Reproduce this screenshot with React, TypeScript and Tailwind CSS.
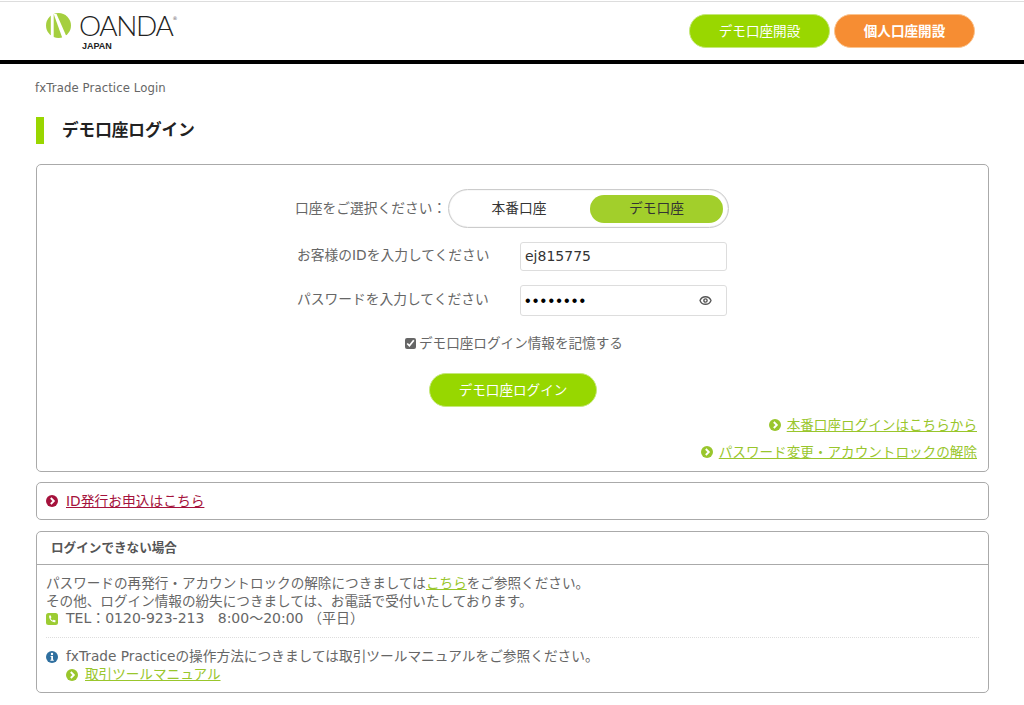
import { Eye } from "lucide-react";

const FONT = "font-['DejaVu_Sans','Noto_Sans_CJK_JP',sans-serif]";

function Arrow({ color, className }: { color: string; className?: string }) {
  return (
    <svg viewBox="0 0 12 12" className={"w-3 h-3 shrink-0 " + (className ?? "")}>
      <circle cx="6" cy="6" r="6" fill={color} />
      <path d="M4.8 3 L7.8 6 L4.8 9" fill="none" stroke="#fff" strokeWidth="1.9" />
    </svg>
  );
}

function Logo() {
  return (
    <div className="flex flex-col ml-[46px] pt-[10px]">
      <div className="flex items-start">
        <svg viewBox="0 0 26 26" className="w-[25px] h-[25px] mt-[1px]">
          <circle cx="13" cy="13" r="13" fill="#a5cf3f" />
          <path d="M5 0 H8 V26 H5 Z" fill="#fff" />
          <path d="M8 1 L11 1 L22 26 L17 26 Z" fill="#fff" />
        </svg>
        <span className="ml-[8px] font-['Lato',sans-serif] font-light text-[28px] leading-[26px] tracking-[-1.4px] text-[#222]">
          OANDA
        </span>
        <span className="text-[5px] leading-[8px] text-[#666] mt-0.5">®</span>
      </div>
      <span className="ml-[36px] font-['Liberation_Sans',sans-serif] font-bold text-[9px] leading-[10px] mt-[3px] text-[#222]">
        JAPAN
      </span>
    </div>
  );
}

export default function App() {
  return (
    <div className={FONT + " w-[1024px] h-[705px] bg-white overflow-hidden text-[13.6px] text-[#666]"}>
      <header className="mt-px border-t border-[#ddd] border-b-4 border-b-black h-[63px] flex justify-between">
        <Logo />
        <div className="flex gap-[4px] mr-[49px] mt-[12px]">
          <a className="w-[141px] h-[34px] rounded-full bg-[#99d700] border border-[#c5e87a] text-white flex items-center justify-center">
            デモ口座開設
          </a>
          <a className="w-[141px] h-[34px] rounded-full bg-[#f68d33] border border-[#fbc48f] text-white font-bold flex items-center justify-center">
            個人口座開設
          </a>
        </div>
      </header>

      <main className="px-[36px]">
        <p className="text-[11.7px] leading-[16px] mt-[16px] -ml-px tracking-[0.1px]">fxTrade Practice Login</p>

        <h1 className="mt-[21px] h-[27px] pt-[2px] border-l-[8px] border-[#99d600] pl-[18px] text-[16.6px] font-bold text-[#222] flex items-center">
          デモ口座ログイン
        </h1>

        <section className="mt-[20px] h-[308px] w-[953px] border border-[#aaa] rounded-[5px] pt-[24px] flex flex-col">
          <div className="w-[434px] ml-[258px] flex flex-col text-[13.75px]">
            <div className="flex items-center justify-between">
              <span>口座をご選択ください：</span>
              <div className="w-[281px] h-[39px] rounded-full border border-[#ccc] shadow-[inset_0_0_1px_#bbb] flex items-center justify-between px-[5px]">
                <span className="w-[130px] text-center text-[#333]">本番口座</span>
                <span className="w-[133px] h-[28px] rounded-full bg-[#a2cf2b] text-[#333] flex items-center justify-center">
                  デモ口座
                </span>
              </div>
            </div>

            <div className="flex items-center justify-between mt-[14px] pl-[2px] pr-[2px]">
              <span className="-mt-[2px]">お客様のIDを入力してください</span>
              <div className="w-[207px] h-[29px] border border-[#ddd] rounded-[3px] px-[4px] flex items-center text-[14px] text-[#333]">
                ej815775
              </div>
            </div>

            <div className="flex items-center justify-between mt-[14px] pl-[2px] pr-[2px]">
              <span className="-mt-[2px]">パスワードを入力してください</span>
              <div className="w-[207px] h-[31px] border border-[#ddd] rounded-[3px] pl-[4px] pr-[14px] flex items-center justify-between text-black">
                <span className="text-[16px] tracking-[2.2px] leading-none font-['Liberation_Sans',sans-serif]">••••••••</span>
                <Eye size={13} strokeWidth={2.6} className="text-[#555]" />
              </div>
            </div>

            <label className="flex items-center ml-[110px] mt-[18px] h-[18px] text-[13.6px]">
              <input type="checkbox" defaultChecked className="w-[11px] h-[11px] mr-[3px] accent-[#666]" />
              デモ口座ログイン情報を記憶する
            </label>

            <a className="w-[168px] h-[34px] mt-[21px] ml-[134px] rounded-full bg-[#97d700] border border-[#c5e87a] text-white text-[13.6px] flex items-center justify-center">
              デモ口座ログイン
            </a>
          </div>

          <div className="flex flex-col items-end gap-[9px] mr-[11px] mt-[9px] text-[#99c62c]">
            <a className="flex items-center gap-[6px] leading-[18px]">
              <Arrow color="#99c62c" />
              <span className="underline">本番口座ログインはこちらから</span>
            </a>
            <a className="flex items-center gap-[6px] leading-[18px]">
              <Arrow color="#99c62c" />
              <span className="underline">パスワード変更・アカウントロックの解除</span>
            </a>
          </div>
        </section>

        <section className="mt-[10px] h-[38px] w-[953px] border border-[#aaa] rounded-[5px] pl-[9px] flex items-center gap-[8px] text-[13.75px]">
          <Arrow color="#a5123c" />
          <a className="underline text-[#a5123c]">ID発行お申込はこちら</a>
        </section>

        <section className="mt-[11px] h-[162px] w-[953px] border border-[#aaa] rounded-[5px] flex flex-col">
          <h2 className="h-[33px] shrink-0 border-b border-[#aaa] pl-[14px] flex items-center text-[12.6px] font-bold text-[#555]">
            ログインできない場合
          </h2>
          <div className="px-[9px] pt-[10px] leading-[17.6px] text-[13.6px]">
            <p>
              パスワードの再発行・アカウントロックの解除につきましては
              <a className="underline text-[#99c62c]">こちら</a>
              をご参照ください。
            </p>
            <p>その他、ログイン情報の紛失につきましては、お電話で受付いたしております。</p>
            <p className="flex items-center">
              <svg viewBox="0 0 12 12" className="w-3 h-3 mr-[8px]">
                <rect width="12" height="12" rx="2.5" fill="#9ccc33" />
                <path d="M3.2 2.6 L4.8 2.4 L5.4 4.6 L4.6 5.3 C5 6.3 5.8 7.2 6.8 7.6 L7.6 6.8 L9.6 7.5 L9.3 9.2 C6 9.8 2.6 6.2 3.2 2.6 Z" fill="#fff" />
              </svg>
              <span className="text-[14px] whitespace-pre">TEL：0120-923-213   8:00～20:00 （平日）</span>
            </p>
            <div className="border-t border-dotted border-[#ddd] mt-[9px] mb-[10px]" />
            <p className="flex items-center text-[13.7px]">
              <svg viewBox="0 0 12 12" className="w-3 h-3 mr-[8px] shrink-0">
                <circle cx="6" cy="6" r="6" fill="#2f6f9f" />
                <circle cx="6" cy="3" r="1.2" fill="#fff" />
                <path d="M4.6 5 H7 V8.7 H7.8 V9.8 H4.4 V8.7 H5.2 V6.1 H4.6 Z" fill="#fff" />
              </svg>
              fxTrade Practiceの操作方法につきましては取引ツールマニュアルをご参照ください。
            </p>
            <a className="flex items-center gap-[7px] ml-[20px] mt-[1px] text-[#99c62c] text-[13.6px]">
              <Arrow color="#99c62c" />
              <span className="underline">取引ツールマニュアル</span>
            </a>
          </div>
        </section>
      </main>
    </div>
  );
}
